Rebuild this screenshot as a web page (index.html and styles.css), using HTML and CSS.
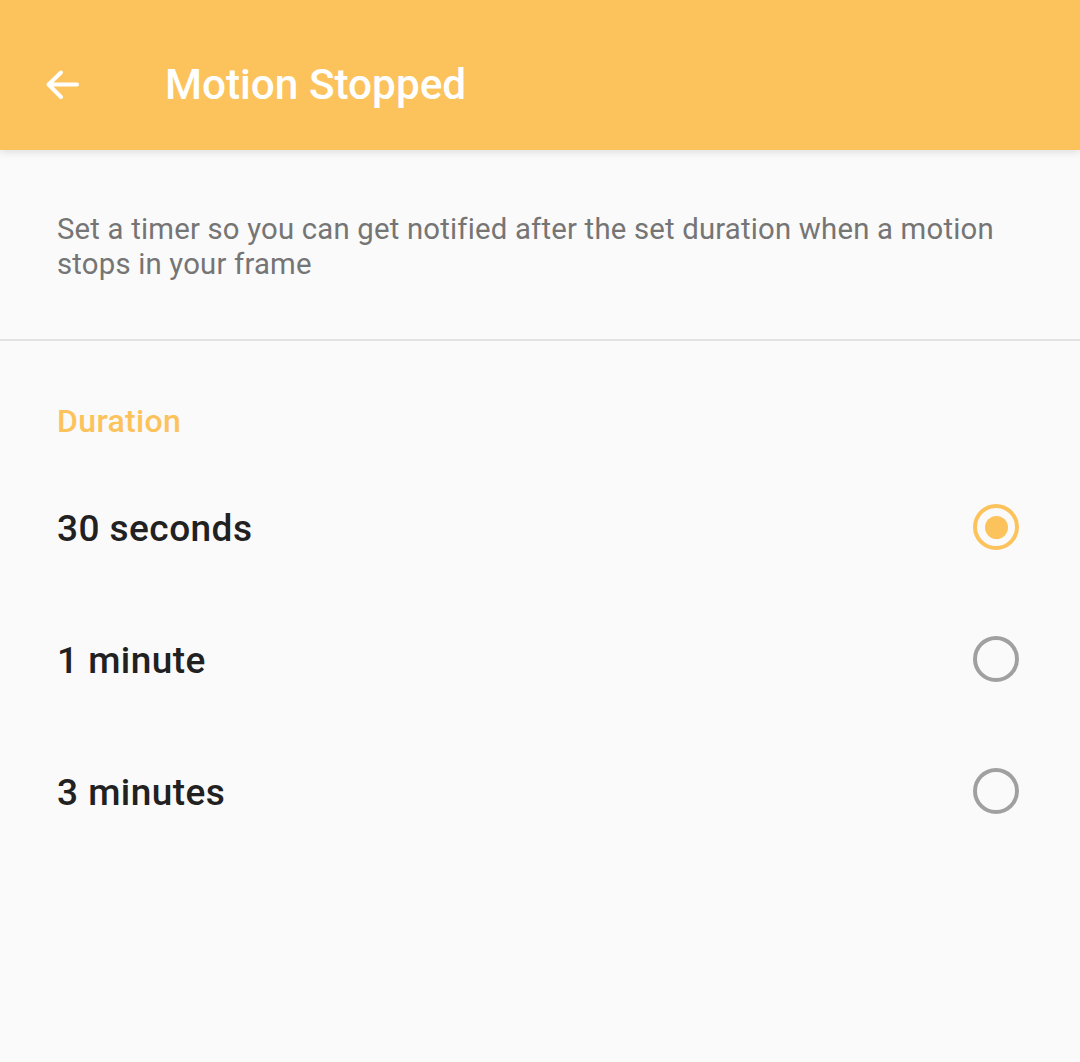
FILE: index.html
```html
<!DOCTYPE html>
<html lang="en">
<head>
    <meta charset="UTF-8">
    <meta name="viewport" content="width=device-width, initial-scale=1.0">
    <title>Motion Stopped</title>
    <link rel="stylesheet" href="styles.css">
</head>
<body>
    <!-- Toolbar -->
    <header class="toolbar">
        <a href="#" class="back-btn">
            <svg viewBox="0 0 36 36">
                <path d="M33 17.5H5M17 5.5L4.5 17.5 17 30" />
            </svg>
        </a>
        <h1>Motion Stopped</h1>
    </header>

    <section class="intro">
        <p>Set a timer so you can get notified after the set duration when a motion stops in your frame</p>
    </section>

    <section class="duration">
        <h2>Duration</h2>
        <ul class="options">
            <li class="option checked">
                <span>30 seconds</span>
                <span class="radio"></span>
            </li>
            <li class="option">
                <span>1 minute</span>
                <span class="radio"></span>
            </li>
            <li class="option">
                <span>3 minutes</span>
                <span class="radio"></span>
            </li>
        </ul>
    </section>
</body>
</html>
```

FILE: styles.css
```css
* {
    margin: 0;
    padding: 0;
    box-sizing: border-box;
    font-family: Roboto, 'Noto Sans', sans-serif;
}

body {
    background: #fafafa;
    min-height: 100vh;
    overflow: hidden;
}

/* Toolbar */
.toolbar {
    height: 150px;
    padding: 20px 0 0 44px;
    background: #fcc35d;
    display: flex;
    align-items: center;
    box-shadow: 0 2px 8px rgba(0, 0, 0, 0.12);
    position: relative;
}

.back-btn {
    width: 36px;
    height: 36px;
    display: flex;
}

.back-btn svg {
    width: 36px;
    height: 36px;
    fill: none;
    stroke: white;
    stroke-width: 4;
    stroke-linecap: round;
    stroke-linejoin: round;
}

.toolbar h1 {
    margin-left: 85px;
    font-size: 42.3px;
    font-weight: 500;
    color: white;
    line-height: 52px;
}

/* Intro */
.intro {
    padding: 62px 57px 57px;
    border-bottom: 2px solid #e2e2e2;
}

.intro p {
    font-size: 29.3px;
    line-height: 35px;
    letter-spacing: 0.2px;
    color: #757575;
}

/* Duration */
.duration {
    padding-top: 60px;
}

.duration h2 {
    padding: 0 57px;
    font-size: 32px;
    font-weight: 500;
    line-height: 40px;
    letter-spacing: 0.35px;
    color: #fcc35d;
    margin-bottom: 21px;
}

.options {
    list-style: none;
}

.option {
    height: 132px;
    padding: 0 61px 0 57px;
    display: flex;
    justify-content: space-between;
    align-items: center;
    font-size: 37px;
    font-weight: 500;
    letter-spacing: 0.45px;
    color: #212121;
}

.radio {
    width: 46px;
    height: 46px;
    border: 4.5px solid #a0a0a0;
    border-radius: 50%;
    display: flex;
    justify-content: center;
    align-items: center;
    margin-top: -2px;
}

.option.checked .radio {
    border-color: #fcc35d;
}

.option.checked .radio::after {
    content: '';
    width: 23px;
    height: 23px;
    border-radius: 50%;
    background: #fcc35d;
}
```
